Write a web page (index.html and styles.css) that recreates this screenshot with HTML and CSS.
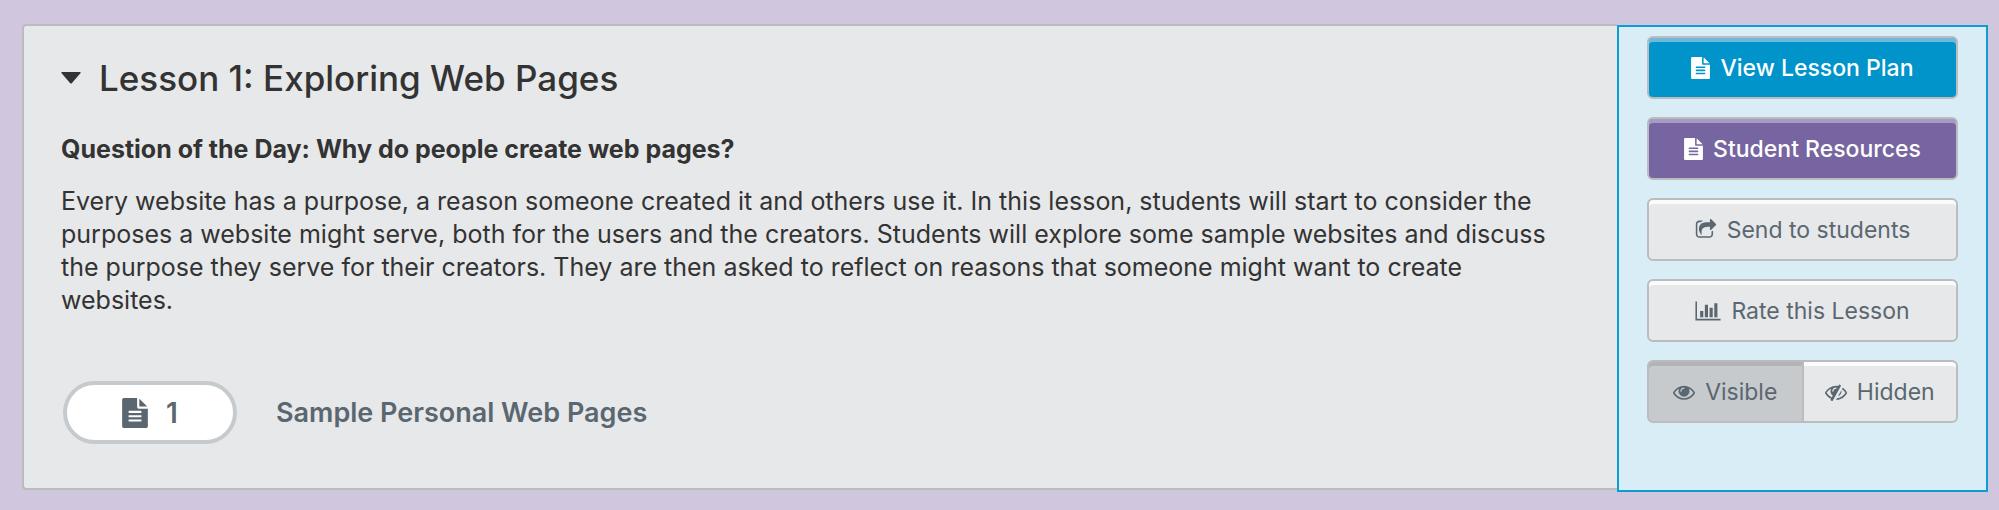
FILE: index.html
```html
<!DOCTYPE html>
<html lang="en">
<head>
<meta charset="utf-8">
<title>Lesson 1: Exploring Web Pages</title>
<link rel="stylesheet" href="styles.css">
</head>
<body>
<svg class="sprite" aria-hidden="true">
  <symbol id="file" viewBox="128 0 1536 1792"><path d="M1596 476q14 14 28 36h-472v-472q22 14 36 28zm-476 164h544v1056q0 40-28 68t-68 28h-1344q-40 0-68-28t-28-68v-1600q0-40 28-68t68-28h800v544q0 40 28 68t68 28zm160 736v-64q0-14-9-23t-23-9h-704q-14 0-23 9t-9 23v64q0 14 9 23t23 9h704q14 0 23-9t9-23zm0-256v-64q0-14-9-23t-23-9h-704q-14 0-23 9t-9 23v64q0 14 9 23t23 9h704q14 0 23-9t9-23zm0-256v-64q0-14-9-23t-23-9h-704q-14 0-23 9t-9 23v64q0 14 9 23t23 9h704q14 0 23-9t9-23z"/></symbol>
  <symbol id="share" viewBox="0 0 1792 1792"><path d="M1472 989v259q0 119-84.500 203.500t-203.500 84.500h-832q-119 0-203.500-84.500t-84.500-203.500v-832q0-119 84.500-203.500t203.500-84.500h255q13 0 22.500 9.500t9.500 22.500q0 27-26 32-77 26-133 60-10 4-16 4h-112q-66 0-113 47t-47 113v832q0 66 47 113t113 47h832q66 0 113-47t47-113v-214q0-19 18-29 28-13 54-37 16-16 35-8 21 9 21 29zm237-496l-384 384q-18 19-45 19-12 0-25-5-39-17-39-59v-192h-160q-323 0-438 131-119 137-74 473 3 23-20 34-8 2-12 2-16 0-26-13-10-14-21-31t-39.500-68.500-49.500-99.500-38.500-114-17.500-122q0-49 3.500-91t14-90 28-88 47-81.500 68.500-74 94.500-61.500 124.500-48.500 159.500-30.500 196.500-11h160v-192q0-42 39-59 13-5 25-5 26 0 45 19l384 384q19 19 19 45t-19 45z"/></symbol>
  <symbol id="chart" viewBox="0 0 2048 1792"><path d="M640 896v512h-256v-512h256zm384-512v1024h-256v-1024h256zm1024 1152v128h-2048v-1536h128v1408h1920zm-640-896v768h-256v-768h256zm384-384v1152h-256v-1152h256z"/></symbol>
  <symbol id="eye" viewBox="0 0 1792 1792"><path d="M1664 960q-152-236-381-353 61 104 61 225 0 185-131.500 316.500t-316.500 131.500-316.500-131.500-131.500-316.500q0-121 61-225-229 117-381 353 133 205 333.500 326.500t434.500 121.500 434.500-121.500 333.500-326.500zm-720-384q0-20-14-34t-34-14q-125 0-214.500 89.500t-89.500 214.500q0 20 14 34t34 14 34-14 14-34q0-86 61-147t147-61q20 0 34-14t14-34zm848 384q0 34-20 69-140 230-376.500 368.500t-499.500 138.500-499.500-139-376.500-368q-20-35-20-69t20-69q140-229 376.500-368t499.500-139 499.500 139 376.500 368q20 35 20 69z"/></symbol>
  <symbol id="eye-slash" viewBox="0 0 1792 1792"><path d="M555 1335l78-141q-87-63-136-159t-49-203q0-121 61-225-229 117-381 353 167 258 427 375zm389-759q0-20-14-34t-34-14q-125 0-214.500 89.500t-89.500 214.500q0 20 14 34t34 14 34-14 14-34q0-86 61-147t147-61q20 0 34-14t14-34zm363-191q0 7-1 9-105 188-315 566t-316 567l-49 89q-10 16-28 16-12 0-134-70-16-10-16-28 0-12 44-87-143-65-263.500-173t-208.500-245q-20-31-20-69t20-69q153-235 380-371t496-136q89 0 180 17l54-97q10-16 28-16 5 0 18 6t31 15.500 33 18.500 31.500 18.500 19.500 11.500q16 10 16 27zm37 447q0 139-79 253.500t-209 164.500l280-502q8 45 8 84zm448 128q0 35-20 69-39 64-109 145-150 172-347.500 267t-419.500 95l74-132q212-18 392.500-137t301.500-307q-115-179-282-294l63-112q95 64 182.500 153t144.500 186q20 34 20 69z"/></symbol>
</svg>
<main class="lesson">
  <section class="content">
    <h1 class="title"><button class="toggle" type="button" aria-expanded="true" aria-label="Collapse lesson"><svg class="caret" viewBox="0 0 20 12"><path d="M1 0h18q1 0 .6 1L11 11q-1 1-2 0L.4 1Q0 0 1 0z"/></svg></button>Lesson 1: Exploring Web Pages</h1>
    <h2 class="question">Question of the Day: Why do people create web pages?</h2>
    <p class="summary">Every website has a purpose, a reason someone created it and others use it. In this lesson, students will start to consider the purposes a website might serve, both for the users and the creators. Students will explore some sample websites and discuss the purpose they serve for their creators. They are then asked to reflect on reasons that someone might want to create websites.</p>
    <div class="level">
      <a class="bubble" href="#level-1"><svg class="bubble-icon"><use href="#file"/></svg>1</a>
      <a class="level-name" href="#level-1">Sample Personal Web Pages</a>
    </div>
  </section>
  <aside class="actions">
    <button class="btn btn-blue" type="button"><svg class="icon icon-file"><use href="#file"/></svg>View Lesson Plan</button>
    <button class="btn btn-purple" type="button"><svg class="icon icon-file"><use href="#file"/></svg>Student Resources</button>
    <button class="btn" type="button"><svg class="icon"><use href="#share"/></svg>Send to students</button>
    <button class="btn" type="button"><svg class="icon icon-chart"><use href="#chart"/></svg>Rate this Lesson</button>
    <div class="group" role="group" aria-label="Lesson visibility">
      <button class="btn btn-on" type="button" aria-pressed="true"><svg class="icon"><use href="#eye"/></svg>Visible</button>
      <button class="btn" type="button" aria-pressed="false"><svg class="icon"><use href="#eye-slash"/></svg>Hidden</button>
    </div>
  </aside>
</main>
</body>
</html>
```
FILE: styles.css
```css
* { box-sizing: border-box; }
body {
  margin: 0;
  padding: 24px 11px 18px 22px;
  background: #d0c7df;
  color: #333;
  font-family: Inter, "Liberation Sans", sans-serif;
}
.sprite { display: none; }
svg { flex: none; fill: currentColor; }
.lesson { display: flex; }
.content {
  flex: 1;
  margin-bottom: 2px;
  padding: 32px 56px 44px 37px;
  border: 2px solid #bbbcbe;
  border-right: 0;
  border-radius: 4px 0 0 4px;
  background: #e7e8ea;
}
.title {
  display: flex;
  align-items: center;
  gap: 18px;
  margin: 0;
  font-size: 35px;
  line-height: 40px;
  font-weight: 500;
}
.toggle { display: flex; padding: 0; border: 0; background: none; color: inherit; }
.caret { width: 20px; height: 12px; }
.question { margin: 35px 0 0; font-size: 25px; line-height: 32px; font-weight: 700; }
.summary { margin: 20px 0 0; font-size: 25px; line-height: 33px; }
.level { display: flex; align-items: center; gap: 39px; margin: 64px 0 0 2px; }
.bubble {
  display: flex;
  align-items: center;
  justify-content: center;
  gap: 18px;
  width: 174px;
  height: 63px;
  border: 4px solid #c6cacd;
  border-radius: 32px;
  background: #fff;
  color: #5b6770;
  font-size: 28px;
  font-weight: 600;
  text-decoration: none;
}
.bubble-icon { width: 26px; height: 30px; }
.level-name { color: #5b6770; font-size: 27px; font-weight: 600; text-decoration: none; }
.actions {
  display: flex;
  flex-direction: column;
  gap: 18px;
  flex: 0 0 371px;
  margin-top: 1px;
  padding: 9px 28px;
  border: 2px solid #0d9dd4;
  background: #d9edf6;
}
.btn {
  display: flex;
  align-items: center;
  justify-content: center;
  gap: 10px;
  min-height: 63px;
  padding: 0 8px;
  border: 2px solid #bbbcbe;
  border-radius: 6px;
  background: #e7e8ea;
  box-shadow: inset 0 4px #fafbfb;
  color: #5b6770;
  font: 400 23px/28px Inter, "Liberation Sans", sans-serif;
}
.btn-blue { background: #0094ca; box-shadow: inset 0 4px #6fb9dc; color: #fff; font-weight: 500; }
.btn-purple { background: #7665a0; box-shadow: inset 0 4px #a79bc5; color: #fff; font-weight: 500; }
.icon { width: 22px; height: 22px; }
.icon-file { width: 19px; }
.icon-chart { width: 26px; }
.group { display: flex; }
.group .btn { flex: 1 1 0; }
.group .btn:first-child { border-radius: 6px 0 0 6px; }
.group .btn:last-child { border-left: 0; border-radius: 0 6px 6px 0; }
.btn-on { background: #c6cacd; box-shadow: inset 0 4px #b2b4b8; }
```
